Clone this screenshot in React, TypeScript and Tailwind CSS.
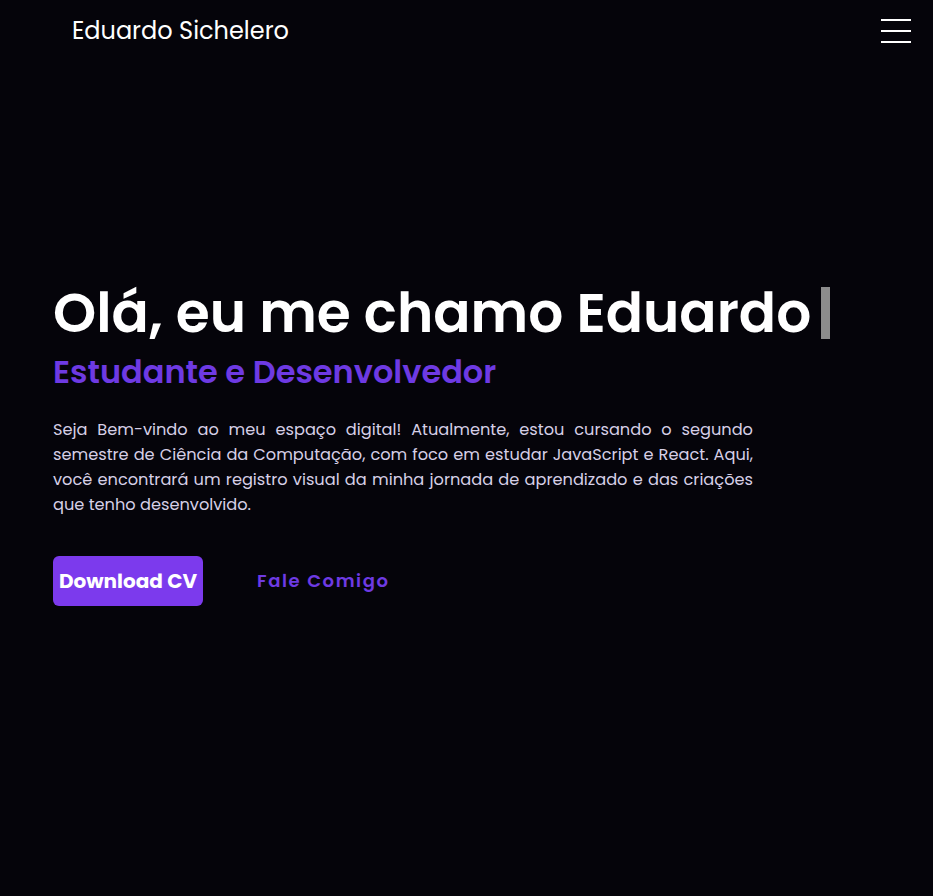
const font = { fontFamily: '"Poppins", Inter, "Noto Sans", sans-serif' };

function Header() {
  return (
    <header className="flex items-center justify-between h-[62px] pl-[72px] pr-[22px]">
      <span className="text-white text-[24px] font-normal">Eduardo Sichelero</span>
      <button type="button" aria-label="Abrir menu" className="flex flex-col gap-[9px] w-[30px]">
        <span className="block h-[2px] w-full bg-white" />
        <span className="block h-[2px] w-full bg-white" />
        <span className="block h-[2px] w-full bg-white" />
      </button>
    </header>
  );
}

export default function App() {
  return (
    <div className="min-h-screen bg-[#05040a]" style={font}>
      <Header />
      <main className="px-[53px] pt-[218px] pb-[280px]">
        <h1 className="flex items-center text-white text-[55px] font-semibold leading-[1.2]">
          Olá, eu me chamo Eduardo
          <span className="ml-[10px] inline-block w-[9px] h-[52px] bg-[#8c8c8c]" />
        </h1>
        <h2 className="mt-[5px] text-[#6e3ae3] text-[32px] font-semibold leading-[1.3]">
          Estudante e Desenvolvedor
        </h2>
        <p className="mt-[24px] w-[700px] text-justify text-[16.2px] leading-[25px] text-[#d6cfe6]">
          Seja Bem-vindo ao meu espaço digital! Atualmente, estou cursando o segundo semestre de
          Ciência da Computação, com foco em estudar JavaScript e React. Aqui, você encontrará um
          registro visual da minha jornada de aprendizado e das criações que tenho desenvolvido.
        </p>
        <div className="mt-[39px] flex items-center gap-[54px]">
          <a
            href="#"
            className="flex items-center justify-center w-[150px] h-[50px] rounded-[6px] bg-[#7c3aed] text-white text-[20px] font-bold"
          >
            Download CV
          </a>
          <a href="#" className="text-[#6e3ae3] text-[18px] font-semibold tracking-[1.6px]">
            Fale Comigo
          </a>
        </div>
      </main>
    </div>
  );
}
